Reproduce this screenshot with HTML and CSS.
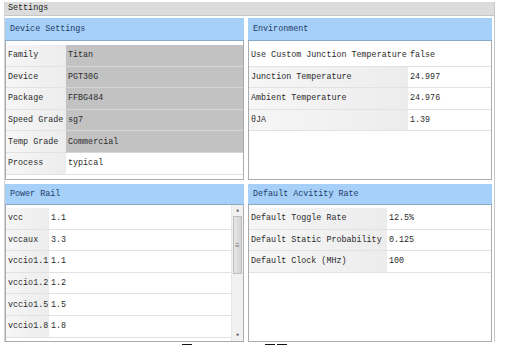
FILE: index.html
```html
<!DOCTYPE html>
<html lang="en">
<head>
    <meta charset="UTF-8">
    <title>Settings</title>
    <link rel="stylesheet" href="styles.css">
</head>
<body>

    <div class="window">
        <div class="title">Settings</div>

        <div class="panels">
            <div class="panel top">
                <div class="panel-head">Device Settings</div>
                <div class="panel-body">
                    <table class="props dev">
                        <tr><td class="key">Family</td><td class="val locked">Titan</td></tr>
                        <tr><td class="key">Device</td><td class="val locked">PGT30G</td></tr>
                        <tr><td class="key">Package</td><td class="val locked">FFBG484</td></tr>
                        <tr><td class="key">Speed Grade</td><td class="val locked">sg7</td></tr>
                        <tr><td class="key">Temp Grade</td><td class="val locked">Commercial</td></tr>
                        <tr><td class="key">Process</td><td class="val">typical</td></tr>
                    </table>
                </div>
            </div>

            <div class="panel top">
                <div class="panel-head">Environment</div>
                <div class="panel-body">
                    <table class="props env">
                        <tr><td class="key plain">Use Custom Junction Temperature</td><td class="val">false</td></tr>
                        <tr><td class="key">Junction Temperature</td><td class="val">24.997</td></tr>
                        <tr><td class="key">Ambient Temperature</td><td class="val">24.976</td></tr>
                        <tr><td class="key">θJA</td><td class="val">1.39</td></tr>
                    </table>
                </div>
            </div>

            <div class="panel bottom">
                <div class="panel-head">Power Rail</div>
                <div class="panel-body scroll">
                    <table class="props rail">
                        <tr><td class="key">vcc</td><td class="val">1.1</td></tr>
                        <tr><td class="key">vccaux</td><td class="val">3.3</td></tr>
                        <tr><td class="key">vccio1.1</td><td class="val">1.1</td></tr>
                        <tr><td class="key">vccio1.2</td><td class="val">1.2</td></tr>
                        <tr><td class="key">vccio1.5</td><td class="val">1.5</td></tr>
                        <tr><td class="key">vccio1.8</td><td class="val">1.8</td></tr>
                    </table>
                    <div class="scrollbar">
                        <div class="arrow">▴</div>
                        <div class="track">
                            <div class="thumb"><span class="grip">≡</span></div>
                        </div>
                        <div class="arrow">▾</div>
                    </div>
                </div>
            </div>

            <div class="panel bottom">
                <div class="panel-head">Default Acvitity Rate</div>
                <div class="panel-body">
                    <table class="props act">
                        <tr><td class="key">Default Toggle Rate</td><td class="val">12.5%</td></tr>
                        <tr><td class="key">Default Static Probability</td><td class="val">0.125</td></tr>
                        <tr><td class="key">Default Clock (MHz)</td><td class="val">100</td></tr>
                    </table>
                </div>
            </div>
        </div>
    </div>

    <div class="taskbar">
        <span class="btn one"></span>
        <span class="btn two"></span>
        <span class="btn"></span>
    </div>

</body>
</html>
```

FILE: styles.css
```css
body {
    margin: 0;
    background-color: #fff;
    color: #2a2a2a;
    font-family: "Liberation Mono", "DejaVu Sans Mono", monospace;
    font-size: 8.4px;
}
.window {
    width: 489px;
    margin: 2px 0 0 4px;
    border-right: 1px solid #c4c8cc;
    border-left: 1px solid #d4d4d4;
}
.title {
    height: 13px;
    line-height: 13px;
    padding-left: 3px;
    background-color: #dcdcdc;
    border-bottom: 1px solid #c6c6c6;
    color: #222;
}
.panels {
    display: grid;
    grid-template-columns: 239px 244px;
    grid-template-rows: 162px 158px;
    column-gap: 4px;
    row-gap: 4px;
    padding: 2px 0 0 0;
}
.panel {
    display: flex;
    flex-direction: column;
}
.panel-head {
    height: 22px;
    line-height: 22px;
    padding-left: 5px;
    background-color: #a6d0f8;
    color: #1d3c6a;
    border-bottom: 1px solid #8aa9c6;
}
.bottom .panel-head {
    height: 20px;
    line-height: 20px;
}
.panel-body {
    flex: 1;
    border: 1px solid #a9adb2;
    border-top: none;
    padding-top: 4px;
    background-color: #fff;
}
.bottom .panel-body {
    padding-top: 3px;
}
.panel-body.scroll {
    display: flex;
    padding-top: 0;
}
.props {
    border-collapse: collapse;
    width: 100%;
    table-layout: fixed;
}
.props td {
    height: 20.6px;
    padding: 0 0 0 2px;
    border-bottom: 1px solid #e2e2e2;
    white-space: nowrap;
    overflow: hidden;
}
.props .key {
    background: linear-gradient(to right, #f6f6f6, #ececec);
}
.props .key.plain {
    background: #fff;
}
.props .val.locked {
    background-color: #c2c2c2;
    border-bottom-color: #d6d6d6;
}
.dev .key { width: 58px; }
.env .key { width: 157px; }
.rail .key { width: 41px; }
.act .key { width: 136px; }
.rail {
    align-self: flex-start;
    margin-top: 3px;
}
.scrollbar {
    width: 11px;
    flex-shrink: 0;
    display: flex;
    flex-direction: column;
    background-color: #f1f1f1;
    border-left: 1px solid #e6e6e6;
}
.arrow {
    height: 11px;
    line-height: 11px;
    text-align: center;
    font-size: 7px;
    color: #555;
}
.track {
    flex: 1;
}
.thumb {
    height: 56px;
    margin: 0 1px;
    background: linear-gradient(to right, #e6e6e6, #d4d4d4);
    border: 1px solid #bdbdbd;
    display: flex;
    align-items: center;
    justify-content: center;
}
.grip {
    font-size: 8px;
    color: #777;
}
.taskbar {
    display: flex;
    padding: 2px 0 0 182px;
    gap: 2px;
}
.btn {
    width: 10px;
    height: 3px;
    background-color: #111;
}
.btn.one {
    margin-right: 71px;
}
```
